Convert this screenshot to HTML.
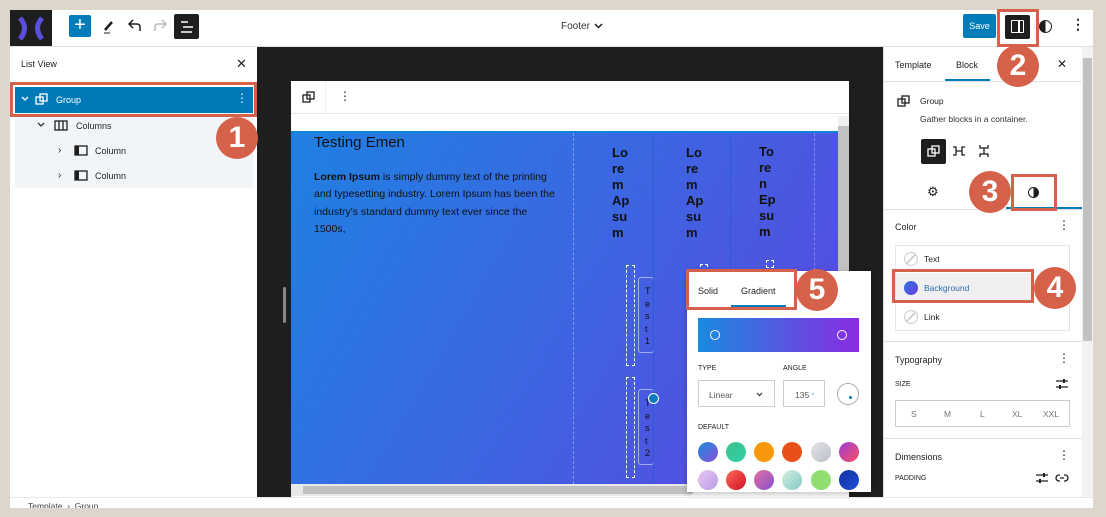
<!DOCTYPE html>
<html><head><meta charset="utf-8"><style>
*{margin:0;padding:0;box-sizing:border-box}
body{width:1106px;height:517px;background:#ddd6cc;position:relative;overflow:hidden;font-family:"Liberation Sans",sans-serif;color:#1e1e1e}
.a{position:absolute}
.t{position:absolute;font-size:9px;white-space:nowrap}
.badge{position:absolute;width:42px;height:42px;border-radius:50%;background:#d6614a;color:#fff;font-weight:bold;font-size:30px;text-align:center;line-height:42px;font-family:"Liberation Sans",sans-serif}
.box{position:absolute;border:3px solid #d6614a}
.sw{position:absolute;width:20px;height:20px;border-radius:50%}
.vt{position:absolute;font-size:13px;font-weight:bold;line-height:16px;color:#111;width:20px;white-space:normal}
</style></head><body>
<div class="a" style="left:10px;top:10px;width:1083px;height:498px;background:#fff"></div>
<div class="a" style="left:10px;top:10px;width:42px;height:37px;background:#1e1e1e"></div>
<svg class="a" style="left:17px;top:16px" width="28" height="25" viewBox="0 0 28 25"><path d="M3 2 Q12 12 3 23 M25 2 Q16 12 25 23" stroke="#5a4ee0" stroke-width="5" fill="none"/></svg>
<div class="a" style="left:69px;top:15px;width:22px;height:22px;background:#007cba;border-radius:2px;color:#fff;font-size:20px;line-height:21px;text-align:center">+</div>
<svg class="a" style="left:101px;top:18px" width="16" height="16"><path d="M4 12 L11 4" stroke="#1e1e1e" stroke-width="2.5"/><path d="M3 15 H9" stroke="#1e1e1e" stroke-width="1"/></svg>
<svg class="a" style="left:127px;top:19px" width="16" height="14"><path d="M13 12 V8 Q13 5 10 5 H3 M6 1 L2 5 L6 9" stroke="#1e1e1e" stroke-width="1.5" fill="none"/></svg>
<svg class="a" style="left:152px;top:19px" width="16" height="14"><path d="M3 12 V8 Q3 5 6 5 H13 M10 1 L14 5 L10 9" stroke="#bbb" stroke-width="1.5" fill="none"/></svg>
<div class="a" style="left:174px;top:14px;width:25px;height:25px;background:#1e1e1e;border-radius:2px"></div>
<svg class="a" style="left:179px;top:19px" width="16" height="16"><path d="M2 3H9M4 8H14M2 13H13" stroke="#fff" stroke-width="1.5"/></svg>
<div class="t" style="left:561px;top:21px;font-size:10px;color:#333">Footer</div>
<svg class="a" style="left:594px;top:23px" width="9" height="6"><path d="M1 1 L4.5 4.5 L8 1" stroke="#1e1e1e" stroke-width="1.5" fill="none"/></svg>
<div class="a" style="left:963px;top:14px;width:33px;height:24px;background:#007cba;border-radius:2px;color:#fff;font-size:9px;line-height:24px;text-align:center">Save</div>
<div class="a" style="left:1005px;top:15px;width:25px;height:24px;background:#1e1e1e;border-radius:2px"></div>
<div class="a" style="left:1011px;top:20px;width:13px;height:13px;border:1.5px solid #fff;border-radius:1px"></div>
<div class="a" style="left:1018px;top:20px;width:1.5px;height:13px;background:#fff"></div>
<div class="a" style="left:1039px;top:20px;width:13px;height:13px;border-radius:50%;border:1.5px solid #1e1e1e;background:linear-gradient(90deg,#1e1e1e 50%,#fff 50%)"></div>
<div class="t" style="left:1071px;top:16px;font-size:14px;font-weight:bold">⋮</div>
<div class="a" style="left:10px;top:46px;width:1083px;height:1px;background:#e0e0e0"></div>
<div class="t" style="left:21px;top:59px;font-size:9px">List View</div>
<div class="t" style="left:236px;top:56px;font-size:13px">✕</div>
<div class="a" style="left:15px;top:113px;width:238px;height:75px;background:#f2f5f8"></div>
<div class="a" style="left:15px;top:87px;width:238px;height:26px;background:#0079b8"></div>
<svg class="a" style="left:21px;top:96px" width="8" height="6"><path d="M1 1 L4 4 L7 1" stroke="#fff" stroke-width="1.3" fill="none"/></svg>
<svg class="a" style="left:35px;top:93px" width="13" height="13"><rect x="1" y="4" width="7" height="7" stroke="#fff" fill="none" stroke-width="1.3"/><rect x="5" y="1" width="7" height="7" stroke="#fff" fill="none" stroke-width="1.3"/></svg>
<div class="t" style="left:56px;top:95px;color:#fff">Group</div>
<div class="t" style="left:236px;top:91px;color:#fff;font-size:12px">⋮</div>
<svg class="a" style="left:37px;top:122px" width="8" height="6"><path d="M1 1 L4 4 L7 1" stroke="#333" stroke-width="1.3" fill="none"/></svg>
<svg class="a" style="left:54px;top:120px" width="14" height="11"><rect x="1" y="1" width="12" height="9" stroke="#1e1e1e" fill="none" stroke-width="1.3"/><path d="M5 1V10M9 1V10" stroke="#1e1e1e" stroke-width="1.3"/></svg>
<div class="t" style="left:76px;top:121px">Columns</div>
<div class="t" style="left:58px;top:145px;font-size:10px">›</div>
<div class="t" style="left:58px;top:170px;font-size:10px">›</div>
<svg class="a" style="left:74px;top:145px" width="14" height="11"><rect x="1" y="1" width="12" height="9" stroke="#1e1e1e" fill="none" stroke-width="1.3"/><rect x="1" y="1" width="4" height="9" fill="#1e1e1e"/></svg>
<svg class="a" style="left:74px;top:170px" width="14" height="11"><rect x="1" y="1" width="12" height="9" stroke="#1e1e1e" fill="none" stroke-width="1.3"/><rect x="1" y="1" width="4" height="9" fill="#1e1e1e"/></svg>
<div class="t" style="left:95px;top:146px">Column</div>
<div class="t" style="left:95px;top:171px">Column</div>
<div class="a" style="left:257px;top:47px;width:626px;height:450px;background:#1e1e1e"></div>
<div class="a" style="left:283px;top:287px;width:3px;height:36px;background:#888;border-radius:2px"></div>
<div class="a" style="left:291px;top:81px;width:558px;height:416px;background:#fff"></div>
<div class="a" style="left:291px;top:113px;width:558px;height:1px;background:#e6e6e6"></div>
<div class="a" style="left:325px;top:81px;width:1px;height:32px;background:#eee"></div>
<svg class="a" style="left:302px;top:91px" width="13" height="13"><rect x="1" y="4" width="7" height="7" stroke="#1e1e1e" fill="none" stroke-width="1.3"/><rect x="5" y="1" width="7" height="7" stroke="#1e1e1e" fill="none" stroke-width="1.3"/></svg>
<div class="t" style="left:339px;top:89px;font-size:12px">⋮</div>
<div class="a" style="left:838px;top:122px;width:11px;height:365px;background:#c1c1c1"></div>
<div class="a" style="left:838px;top:116px;width:11px;height:10px;background:#f0f0f0"></div>
<div class="a" style="left:291px;top:131px;width:547px;height:353px;background:linear-gradient(120deg,#1f80e2 0%,#3a68e2 45%,#5c45e0 100%);border-top:2px solid #0a84d8"></div>
<div class="a" style="left:291px;top:484px;width:400px;height:12px;background:#e8e8e8"></div>
<div class="a" style="left:303px;top:486px;width:390px;height:8px;background:#c0c0c0"></div>
<div class="a" style="left:573px;top:133px;width:0;height:351px;border-left:1px dashed rgba(255,255,255,.35)"></div>
<div class="a" style="left:653px;top:133px;width:1px;height:351px;background:rgba(30,90,200,.6)"></div>
<div class="a" style="left:730px;top:133px;width:1px;height:351px;background:rgba(30,90,200,.6)"></div>
<div class="a" style="left:814px;top:133px;width:0;height:351px;border-left:1px dashed rgba(255,255,255,.3)"></div>
<div class="t" style="left:314px;top:134px;font-size:15px;color:#111">Testing Emen</div>
<div class="a" style="left:314px;top:169px;width:241px;font-size:10.5px;line-height:17.3px;color:#111"><b>Lorem Ipsum</b> is simply dummy text of the printing and typesetting industry. Lorem Ipsum has been the industry's standard dummy text ever since the 1500s,</div>
<div class="vt" style="left:612px;top:145px">Lo re m Ap su m</div>
<div class="vt" style="left:686px;top:145px">Lo re m Ap su m</div>
<div class="vt" style="left:759px;top:144px">To re n Ep su m</div>
<div class="a" style="left:626px;top:265px;width:9px;height:101px;border:1px dashed #fff"></div>
<div class="a" style="left:626px;top:377px;width:9px;height:101px;border:1px dashed #fff"></div>
<div class="a" style="left:638px;top:277px;width:16px;height:76px;border:1px solid rgba(255,255,255,.5);border-right:none;border-radius:3px"></div>
<div class="a" style="left:638px;top:389px;width:16px;height:76px;border:1px solid rgba(255,255,255,.5);border-right:none;border-radius:3px"></div>
<div class="a" style="left:645px;top:285px;font-size:9px;line-height:12.5px;color:#111;width:6px">T e s t 1</div>
<div class="a" style="left:645px;top:397px;font-size:9px;line-height:12.5px;color:#111;width:6px">T e s t 2</div>
<div class="a" style="left:648px;top:393px;width:11px;height:11px;border-radius:50%;background:#0a7bbf;border:1.5px solid #fff"></div>
<div class="a" style="left:700px;top:264px;width:8px;height:8px;border:1px dashed #fff"></div>
<div class="a" style="left:766px;top:260px;width:8px;height:8px;border:1px dashed #fff"></div>
<div class="a" style="left:687px;top:271px;width:184px;height:221px;background:#fff;box-shadow:0 2px 6px rgba(0,0,0,.25)"></div>
<div class="t" style="left:698px;top:286px">Solid</div>
<div class="t" style="left:741px;top:286px">Gradient</div>
<div class="a" style="left:731px;top:305px;width:55px;height:2px;background:#007cba"></div>
<div class="a" style="left:698px;top:318px;width:161px;height:34px;background:linear-gradient(90deg,#1a8ae0,#8a2be2)"></div>
<div class="a" style="left:710px;top:330px;width:10px;height:10px;border-radius:50%;border:1.5px solid #fff"></div>
<div class="a" style="left:837px;top:330px;width:10px;height:10px;border-radius:50%;border:1.5px solid #fff"></div>
<div class="t" style="left:698px;top:365px;font-size:7px">TYPE</div>
<div class="t" style="left:783px;top:365px;font-size:7px">ANGLE</div>
<div class="a" style="left:698px;top:380px;width:77px;height:27px;border:1px solid #ccc"></div>
<div class="t" style="left:709px;top:390px;font-size:8.5px;color:#555">Linear</div>
<svg class="a" style="left:756px;top:392px" width="7" height="5"><path d="M1 1 L3.5 3.5 L6 1" stroke="#333" stroke-width="1.2" fill="none"/></svg>
<div class="a" style="left:783px;top:380px;width:42px;height:27px;border:1px solid #ccc"></div>
<div class="t" style="left:795px;top:390px;font-size:8.5px;color:#555">135 <span style="color:#39f;font-size:7px">°</span></div>
<div class="a" style="left:837px;top:383px;width:22px;height:22px;border-radius:50%;border:1px solid #aaa"></div>
<div class="a" style="left:849px;top:396px;width:3px;height:3px;border-radius:50%;background:#007cba"></div>
<div class="t" style="left:698px;top:424px;font-size:7px">DEFAULT</div>
<div class="sw" style="left:698px;top:442px;background:linear-gradient(135deg,#1a8ae0,#8a50d8)"></div>
<div class="sw" style="left:726px;top:442px;background:linear-gradient(135deg,#3fc08a,#30d0a8)"></div>
<div class="sw" style="left:754px;top:442px;background:#f8960c"></div>
<div class="sw" style="left:782px;top:442px;background:#e8501a"></div>
<div class="sw" style="left:811px;top:442px;background:linear-gradient(135deg,#e6e6ea,#b8bec5)"></div>
<div class="sw" style="left:839px;top:442px;background:linear-gradient(135deg,#9b3fd8,#fe4c60)"></div>
<div class="sw" style="left:698px;top:470px;background:linear-gradient(135deg,#e8c4f0,#b79ee8)"></div>
<div class="sw" style="left:726px;top:470px;background:linear-gradient(135deg,#ff6a5a,#d01020)"></div>
<div class="sw" style="left:754px;top:470px;background:linear-gradient(135deg,#e070a0,#8850d0)"></div>
<div class="sw" style="left:782px;top:470px;background:linear-gradient(135deg,#d8eee0,#80cac8)"></div>
<div class="sw" style="left:811px;top:470px;background:#90de70"></div>
<div class="sw" style="left:839px;top:470px;background:linear-gradient(135deg,#1030a0,#2050d8)"></div>
<div class="a" style="left:883px;top:47px;width:1px;height:450px;background:#e0e0e0"></div>
<div class="t" style="left:895px;top:60px">Template</div>
<div class="t" style="left:956px;top:60px">Block</div>
<div class="a" style="left:945px;top:79px;width:45px;height:2px;background:#007cba"></div>
<div class="t" style="left:1057px;top:57px;font-size:12px">✕</div>
<div class="a" style="left:883px;top:81px;width:199px;height:1px;background:#e0e0e0"></div>
<svg class="a" style="left:897px;top:95px" width="13" height="13"><rect x="1" y="4" width="7" height="7" stroke="#1e1e1e" fill="none" stroke-width="1.3"/><rect x="5" y="1" width="7" height="7" stroke="#1e1e1e" fill="none" stroke-width="1.3"/></svg>
<div class="t" style="left:920px;top:96px;font-size:8.5px">Group</div>
<div class="t" style="left:920px;top:114px;font-size:8.5px;color:#333">Gather blocks in a container.</div>
<div class="a" style="left:921px;top:139px;width:25px;height:25px;background:#1e1e1e;border-radius:2px"></div>
<svg class="a" style="left:927px;top:145px" width="13" height="13"><rect x="1" y="4" width="7" height="7" stroke="#fff" fill="none" stroke-width="1.3"/><rect x="5" y="1" width="7" height="7" stroke="#fff" fill="none" stroke-width="1.3"/></svg>
<svg class="a" style="left:952px;top:145px" width="14" height="12"><path d="M1 2H4V10H1M13 2H10V10H13M4 6H10" stroke="#1e1e1e" stroke-width="1.3" fill="none"/></svg>
<svg class="a" style="left:978px;top:144px" width="12" height="14"><path d="M2 1V4H10V1M2 13V10H10V13M6 4V10" stroke="#1e1e1e" stroke-width="1.3" fill="none"/></svg>
<div class="t" style="left:927px;top:184px;font-size:13px">⚙</div>
<div class="a" style="left:1028px;top:187px;width:11px;height:11px;border-radius:50%;border:1.5px solid #1e1e1e;background:linear-gradient(90deg,#fff 50%,#1e1e1e 50%)"></div>
<div class="a" style="left:1006px;top:207px;width:76px;height:2px;background:#007cba"></div>
<div class="a" style="left:883px;top:209px;width:199px;height:1px;background:#e0e0e0"></div>
<div class="t" style="left:895px;top:222px">Color</div>
<div class="t" style="left:1058px;top:218px;font-size:12px">⋮</div>
<div class="a" style="left:895px;top:245px;width:175px;height:86px;border:1px solid #e4e4e4"></div>
<div class="a" style="left:896px;top:273px;width:136px;height:29px;background:#f0f0f0"></div>
<div class="a" style="left:904px;top:252px;width:14px;height:14px;border-radius:50%;border:1px solid #ccc;background:linear-gradient(135deg,transparent 45%,#ccc 45%,#ccc 55%,transparent 55%)"></div>
<div class="t" style="left:924px;top:254px;font-size:8.5px">Text</div>
<div class="a" style="left:904px;top:281px;width:14px;height:14px;border-radius:50%;background:linear-gradient(135deg,#2a70e0,#6a40e0)"></div>
<div class="t" style="left:924px;top:283px;font-size:8.5px;color:#2a6cb0">Background</div>
<div class="a" style="left:904px;top:310px;width:14px;height:14px;border-radius:50%;border:1px solid #ccc;background:linear-gradient(135deg,transparent 45%,#ccc 45%,#ccc 55%,transparent 55%)"></div>
<div class="t" style="left:924px;top:312px;font-size:8.5px">Link</div>
<div class="a" style="left:883px;top:341px;width:199px;height:1px;background:#e0e0e0"></div>
<div class="t" style="left:895px;top:355px">Typography</div>
<div class="t" style="left:1058px;top:351px;font-size:12px">⋮</div>
<div class="t" style="left:895px;top:381px;font-size:7px">SIZE</div>
<svg class="a" style="left:1055px;top:378px" width="14" height="12"><path d="M1 3H13M1 9H13" stroke="#1e1e1e" stroke-width="1.3"/><rect x="8" y="1" width="2" height="4" fill="#1e1e1e"/><rect x="4" y="7" width="2" height="4" fill="#1e1e1e"/></svg>
<div class="a" style="left:895px;top:400px;width:175px;height:27px;border:1px solid #ccc"></div>
<div class="t" style="left:911px;top:409px;font-size:8.5px;color:#777">S</div>
<div class="t" style="left:944px;top:409px;font-size:8.5px;color:#777">M</div>
<div class="t" style="left:980px;top:409px;font-size:8.5px;color:#777">L</div>
<div class="t" style="left:1012px;top:409px;font-size:8.5px;color:#777">XL</div>
<div class="t" style="left:1043px;top:409px;font-size:8.5px;color:#777">XXL</div>
<div class="a" style="left:883px;top:438px;width:199px;height:1px;background:#e0e0e0"></div>
<div class="t" style="left:895px;top:452px">Dimensions</div>
<div class="t" style="left:1058px;top:448px;font-size:12px">⋮</div>
<div class="t" style="left:895px;top:475px;font-size:7px">PADDING</div>
<svg class="a" style="left:1035px;top:472px" width="14" height="12"><path d="M1 3H13M1 9H13" stroke="#1e1e1e" stroke-width="1.3"/><rect x="8" y="1" width="2" height="4" fill="#1e1e1e"/><rect x="4" y="7" width="2" height="4" fill="#1e1e1e"/></svg>
<svg class="a" style="left:1055px;top:473px" width="14" height="10"><path d="M5 2H4A3 3 0 0 0 4 8H5M9 2H10A3 3 0 0 1 10 8H9M5 5H9" stroke="#1e1e1e" stroke-width="1.3" fill="none"/></svg>
<div class="a" style="left:1082px;top:47px;width:11px;height:450px;background:#f2f2f2"></div>
<div class="a" style="left:1083px;top:58px;width:9px;height:283px;background:#c1c1c1"></div>
<div class="a" style="left:10px;top:497px;width:1083px;height:1px;background:#e8e8e8"></div>
<div class="t" style="left:28px;top:501px;font-size:8.5px;color:#444">Template&nbsp;&nbsp;›&nbsp;&nbsp;Group</div>
<div class="a" style="left:0;top:508px;width:1106px;height:9px;background:#ddd6cc"></div>
<div class="box" style="left:10px;top:82px;width:247px;height:35px"></div>
<div class="box" style="left:997px;top:9px;width:42px;height:38px"></div>
<div class="box" style="left:1011px;top:174px;width:46px;height:37px"></div>
<div class="box" style="left:892px;top:269px;width:142px;height:34px"></div>
<div class="box" style="left:686px;top:269px;width:111px;height:41px"></div>
<div class="badge" style="left:216px;top:117px">1</div>
<div class="badge" style="left:997px;top:45px">2</div>
<div class="badge" style="left:969px;top:171px">3</div>
<div class="badge" style="left:1034px;top:267px">4</div>
<div class="badge" style="left:796px;top:269px">5</div>
</body></html>
